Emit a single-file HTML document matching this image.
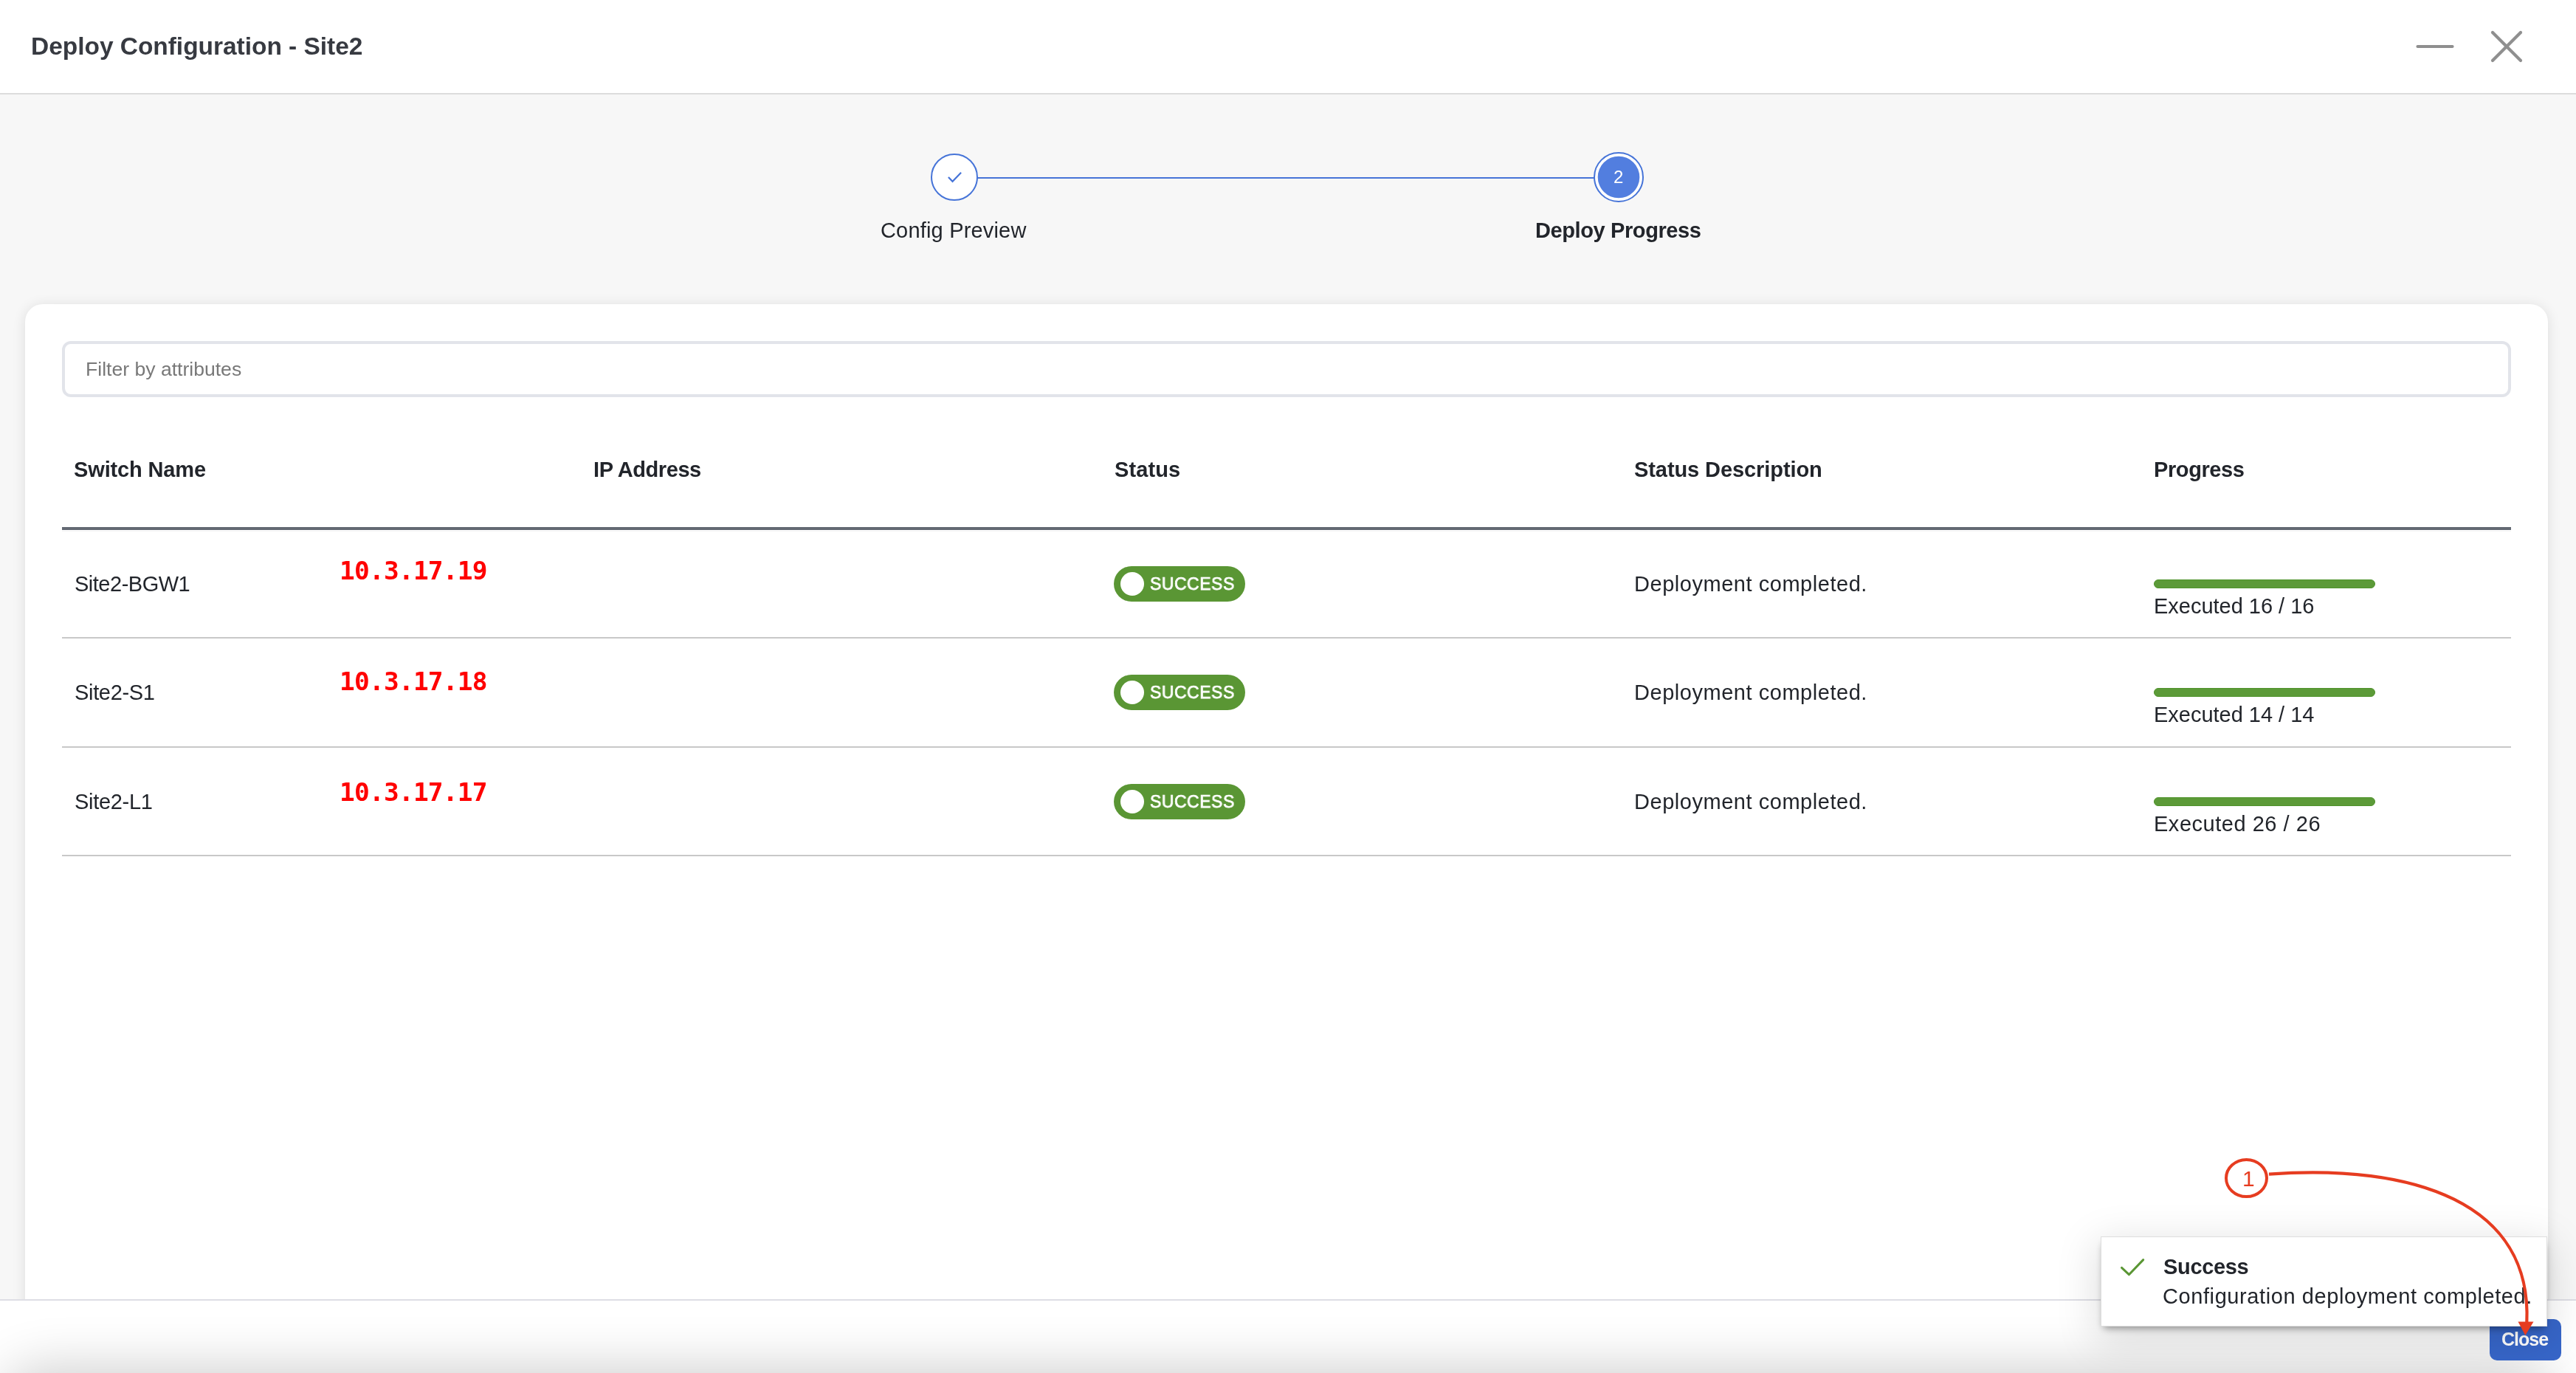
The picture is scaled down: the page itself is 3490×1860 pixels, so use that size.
<!DOCTYPE html>
<html lang="en"><head><meta charset="utf-8"><title>Deploy Configuration - Site2</title>
<style>
*{box-sizing:border-box;margin:0;padding:0}
html,body{width:3490px;height:1860px;overflow:hidden;background:#f7f7f7;font-family:"Liberation Sans",sans-serif}
.t{position:absolute;white-space:nowrap;line-height:1;display:block;will-change:transform}
.abs{position:absolute}
.mono{font-family:"DejaVu Sans Mono","Liberation Mono",monospace}
#hdr{left:0;top:0;width:3490px;height:128px;background:#fff;border-bottom:2px solid #dcdcdc}
#card{left:34px;top:412px;width:3418px;height:1500px;background:#fff;border-radius:24px;box-shadow:0 2px 18px rgba(0,0,0,.11)}
#filter{left:84px;top:462px;width:3318px;height:76px;border:4px solid #e2e4ea;border-radius:12px;background:#fff}
.hl{left:84px;width:3318px;height:2px;background:#c8c8c8}
#thb{left:84px;top:714px;width:3318px;height:4px;background:#636973}
.badge{left:1509px;width:178px;height:48px;border-radius:24px;background:#5a9634}
.dot{left:1518px;width:32px;height:32px;border-radius:16px;background:#fff}
.bar{left:2918px;width:300px;height:12px;border-radius:6px;background:#5c9a38;border:1px solid #4f932b}
#foot{left:0;top:1760px;width:3490px;height:100px;background:#fff;border-top:2px solid #dedee5;overflow:hidden}
#footsh{left:30px;top:120px;width:3405px;height:60px;box-shadow:0 0 70px 30px rgba(0,0,0,.19);border-radius:40px}
#toast{left:2846px;top:1675px;width:605px;height:122px;background:#fff;border:1px solid #dedede;box-shadow:0 6px 10px -4px rgba(0,0,0,.42),0 14px 56px 6px rgba(0,0,0,.13)}
#close{left:3373px;top:1787px;width:97px;height:56px;border-radius:10px;background:#3766c9}
</style></head>
<body>
<div id="hdr" class="abs"></div>
<span class="t" style="left:41.80px;top:46.04px;font-size:33.5px;font-weight:700;color:#373a41;letter-spacing:-0.036px;">Deploy Configuration - Site2</span>
<svg class="abs" style="left:3260px;top:30px" width="180" height="70" viewBox="0 0 180 70">
<line x1="15.5" y1="33" x2="62.5" y2="33" stroke="#8f8f8f" stroke-width="4.2" stroke-linecap="round"/>
<line x1="117" y1="14" x2="155" y2="52" stroke="#8f8f8f" stroke-width="4.2" stroke-linecap="round"/>
<line x1="155" y1="14" x2="117" y2="52" stroke="#8f8f8f" stroke-width="4.2" stroke-linecap="round"/>
</svg>
<svg class="abs" style="left:1240px;top:190px" width="1010" height="100" viewBox="0 0 1010 100">
<line x1="84" y1="51" x2="920" y2="51" stroke="#4674d8" stroke-width="2"/>
<circle cx="53" cy="50" r="31" fill="#fff" stroke="#4674d8" stroke-width="2"/>
<polyline points="44.9,49.9 50.5,55.8 62.1,43.8" fill="none" stroke="#4674d8" stroke-width="2.2"/>
<circle cx="953" cy="50" r="33" fill="#fff" stroke="#4674d8" stroke-width="2"/>
<circle cx="953" cy="50" r="28.3" fill="#527edf"/>
</svg>
<span class="t" style="left:2186.10px;top:227.88px;font-size:24px;font-weight:400;color:#fff;">2</span>
<span class="t" style="left:1193.40px;top:298.05px;font-size:29px;font-weight:400;color:#22252b;letter-spacing:0.178px;">Config Preview</span>
<span class="t" style="left:2080.40px;top:298.05px;font-size:29px;font-weight:700;color:#22252b;letter-spacing:-0.396px;">Deploy Progress</span>
<div id="card" class="abs"></div>
<div id="filter" class="abs"></div>
<span class="t" style="left:115.70px;top:487.08px;font-size:26.6px;font-weight:400;color:#787878;letter-spacing:-0.008px;">Filter by attributes</span>
<span class="t" style="left:100.40px;top:621.95px;font-size:29px;font-weight:700;color:#22252b;letter-spacing:-0.137px;">Switch Name</span>
<span class="t" style="left:804.40px;top:621.95px;font-size:29px;font-weight:700;color:#22252b;letter-spacing:-0.408px;">IP Address</span>
<span class="t" style="left:1509.50px;top:621.95px;font-size:29px;font-weight:700;color:#22252b;letter-spacing:0.120px;">Status</span>
<span class="t" style="left:2214.20px;top:621.95px;font-size:29px;font-weight:700;color:#22252b;letter-spacing:-0.082px;">Status Description</span>
<span class="t" style="left:2917.80px;top:621.95px;font-size:29px;font-weight:700;color:#22252b;letter-spacing:-0.400px;">Progress</span>
<div id="thb" class="abs"></div><div class="abs" style="left:84px;top:719px;width:3318px;height:1px;background:#f3f3f3"></div>
<div class="hl abs" style="top:863px"></div>
<span class="t" style="left:100.50px;top:776.95px;font-size:29px;font-weight:400;color:#22252b;letter-spacing:-0.492px;">Site2-BGW1</span>
<span class="t  mono" style="left:459.70px;top:756.21px;font-size:34.5px;font-weight:700;color:#ff0000;letter-spacing:-0.793px;">10.3.17.19</span>
<div class="badge abs" style="top:767.00px"></div><div class="dot abs" style="top:775.00px"></div>
<span class="t" style="left:1558.03px;top:779.52px;font-size:23.6px;font-weight:400;color:#fff;letter-spacing:0.600px;-webkit-text-stroke:0.75px #fff;transform-origin:left center;transform:scaleX(0.9713);">SUCCESS</span>
<span class="t" style="left:2213.80px;top:776.95px;font-size:29px;font-weight:400;color:#22252b;letter-spacing:0.535px;">Deployment completed.</span>
<div class="bar abs" style="top:785.00px"></div>
<span class="t" style="left:2918.00px;top:806.95px;font-size:29px;font-weight:400;color:#22252b;letter-spacing:-0.015px;">Executed 16 / 16</span>
<div class="hl abs" style="top:1011px"></div>
<span class="t" style="left:100.50px;top:923.95px;font-size:29px;font-weight:400;color:#22252b;letter-spacing:-0.329px;">Site2-S1</span>
<span class="t  mono" style="left:459.70px;top:906.21px;font-size:34.5px;font-weight:700;color:#ff0000;letter-spacing:-0.793px;">10.3.17.18</span>
<div class="badge abs" style="top:914.00px"></div><div class="dot abs" style="top:922.00px"></div>
<span class="t" style="left:1558.03px;top:926.52px;font-size:23.6px;font-weight:400;color:#fff;letter-spacing:0.600px;-webkit-text-stroke:0.75px #fff;transform-origin:left center;transform:scaleX(0.9713);">SUCCESS</span>
<span class="t" style="left:2213.80px;top:923.95px;font-size:29px;font-weight:400;color:#22252b;letter-spacing:0.535px;">Deployment completed.</span>
<div class="bar abs" style="top:932.00px"></div>
<span class="t" style="left:2918.00px;top:953.95px;font-size:29px;font-weight:400;color:#22252b;letter-spacing:-0.015px;">Executed 14 / 14</span>
<div class="hl abs" style="top:1158px"></div>
<span class="t" style="left:100.50px;top:1071.95px;font-size:29px;font-weight:400;color:#22252b;letter-spacing:-0.298px;">Site2-L1</span>
<span class="t  mono" style="left:459.70px;top:1056.21px;font-size:34.5px;font-weight:700;color:#ff0000;letter-spacing:-0.793px;">10.3.17.17</span>
<div class="badge abs" style="top:1062.00px"></div><div class="dot abs" style="top:1070.00px"></div>
<span class="t" style="left:1558.03px;top:1074.52px;font-size:23.6px;font-weight:400;color:#fff;letter-spacing:0.600px;-webkit-text-stroke:0.75px #fff;transform-origin:left center;transform:scaleX(0.9713);">SUCCESS</span>
<span class="t" style="left:2213.80px;top:1071.95px;font-size:29px;font-weight:400;color:#22252b;letter-spacing:0.535px;">Deployment completed.</span>
<div class="bar abs" style="top:1080.00px"></div>
<span class="t" style="left:2918.00px;top:1101.95px;font-size:29px;font-weight:400;color:#22252b;letter-spacing:0.525px;">Executed 26 / 26</span>
<div id="foot" class="abs"><div id="footsh" class="abs"></div></div>
<div id="close" class="abs"></div>
<span class="t" style="left:3388.70px;top:1802.43px;font-size:25px;font-weight:700;color:#fff;letter-spacing:-0.969px;">Close</span>
<div id="toast" class="abs"></div>
<svg class="abs" style="left:2866px;top:1700px" width="50" height="36" viewBox="2866 1700 50 36"><polyline points="2874.5,1717.3 2884.4,1726.7 2903.7,1706.6" fill="none" stroke="#5a9634" stroke-width="3" stroke-linecap="round" stroke-linejoin="round"/></svg>
<span class="t" style="left:2931.30px;top:1702.05px;font-size:29px;font-weight:700;color:#22252b;letter-spacing:-0.328px;">Success</span>
<span class="t" style="left:2930.30px;top:1742.05px;font-size:29px;font-weight:400;color:#22252b;letter-spacing:0.587px;">Configuration deployment completed.</span>
<svg class="abs" style="left:3000px;top:1560px" width="460" height="260" viewBox="3000 1560 460 260">
<ellipse cx="3043.5" cy="1596" rx="27.5" ry="25.1" fill="none" stroke="#e63c20" stroke-width="4"/>
<path d="M3074 1590.6 C3269.3 1576.4 3431 1628.6 3423.3 1792" fill="none" stroke="#e63c20" stroke-width="4.2"/>
<polygon points="3411.5,1790.5 3432.5,1790.5 3421.3,1809" fill="#e63c20"/>
</svg>
<span class="t" style="left:3037.50px;top:1581.90px;font-size:30px;font-weight:400;color:#e63c20;">1</span>
</body></html>
